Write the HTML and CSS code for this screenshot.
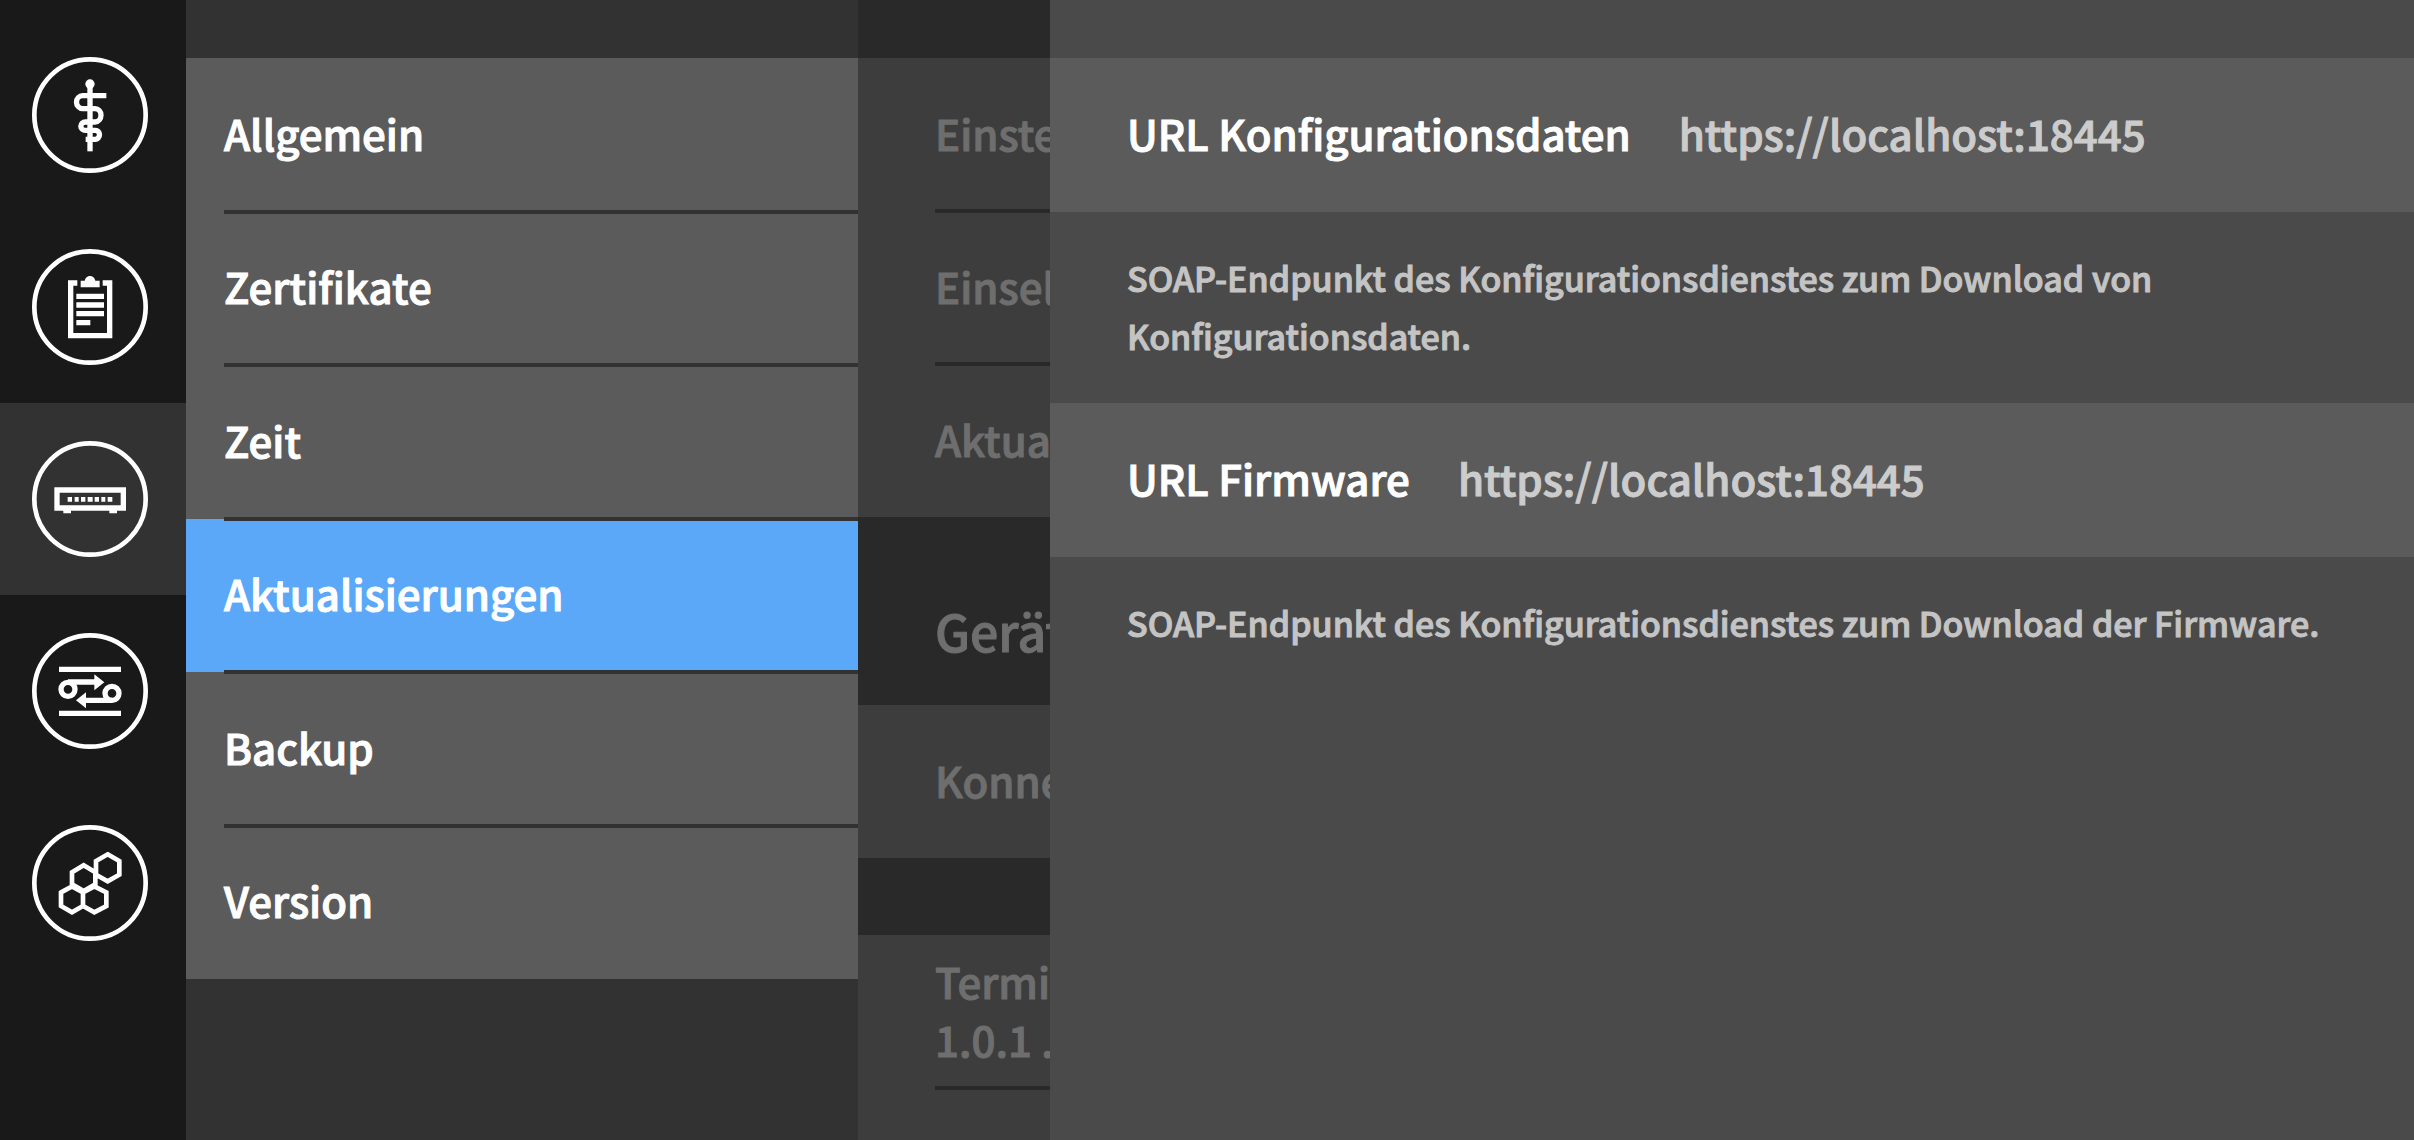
FILE: index.html
```html
<!DOCTYPE html>
<html lang="de">
<head>
<meta charset="utf-8">
<title>Aktualisierungen</title>
<link rel="stylesheet" href="styles.css">
</head>
<body>
<div class="app">
  <nav class="rail" aria-label="Hauptnavigation">
    <a class="rail-item" href="#praxis" aria-label="Praxis">
      <svg class="icon" viewBox="96 51 348 348">
        <circle class="ring" cx="270" cy="225" r="167"/>
        <circle class="solid" cx="270" cy="132" r="14"/>
        <path class="line" d="M270 132V334"/>
        <path class="line" d="M319 167H248a18 19 0 0 0 0 39H285a18 20 0 0 1 0 40H256a13 12 0 0 0 0 25H286a12 13 0 0 1 0 27H257"/>
      </svg>
    </a>
    <a class="rail-item" href="#protokoll" aria-label="Protokoll">
      <svg class="icon" viewBox="96 43 348 348">
        <circle class="ring" cx="270" cy="217" r="167"/>
        <path class="line" d="M232 145H212V303H329V145H308"/>
        <path class="solid" d="M242 158V138H254Q258 124 270 124T286 138H299V158Z"/>
        <path class="line" d="M229 185H312M229 211H312M229 237H312M229 264H271"/>
      </svg>
    </a>
    <a class="rail-item rail-item-active" href="#konnektor" aria-label="Konnektor" aria-current="page">
      <svg class="icon" viewBox="96 123 348 348">
        <circle class="ring" cx="270" cy="297" r="167"/>
        <path class="line" d="M171 270H370V324H171Z"/>
        <path class="solid" d="M190 330H213V340H190ZM328 330H351V340H328Z"/>
        <path class="solid" d="M203 291h13v14h-13zM224 291h12v14h-12zM243 291h13v14h-13zM263 291h15v14h-15zM284 291h13v14h-13zM304 291h12v14h-12zM323 291h14v14h-14z"/>
      </svg>
    </a>
    <a class="rail-item" href="#netzwerk" aria-label="Netzwerk">
      <svg class="icon" viewBox="96 69 348 348">
        <circle class="ring" cx="270" cy="243" r="167"/>
        <path class="line" d="M177 178H363M177 310H363M204 216H296M336 271H245"/>
        <circle class="line" cx="204" cy="238" r="21"/>
        <circle class="line" cx="336" cy="250" r="21"/>
        <path class="solid" d="M283 193L313 217L283 241ZM258 247L228 271L258 295Z"/>
      </svg>
    </a>
    <a class="rail-item" href="#module" aria-label="Module">
      <svg class="icon" viewBox="96 75 348 348">
        <circle class="ring" cx="270" cy="249" r="167"/>
        <path class="hex" d="M323 163L358 183V224L323 244L288 224V183ZM251 196L286 217V253L251 273L216 253V217ZM216 259L249 277V318L216 337L183 318V277ZM283 259L319 277V318L283 337L249 318V277Z"/>
      </svg>
    </a>
  </nav>

  <nav class="menu" aria-label="Konnektor">
    <ul class="menu-list">
      <li class="menu-row"><a class="menu-link" href="#allgemein">Allgemein</a></li>
      <li class="menu-row"><a class="menu-link" href="#zertifikate">Zertifikate</a></li>
      <li class="menu-row"><a class="menu-link" href="#zeit">Zeit</a></li>
      <li class="menu-row menu-row-active"><a class="menu-link" href="#aktualisierungen" aria-current="page">Aktualisierungen</a></li>
      <li class="menu-row"><a class="menu-link" href="#backup">Backup</a></li>
      <li class="menu-row"><a class="menu-link" href="#version">Version</a></li>
    </ul>
  </nav>

  <section class="under">
    <ul class="under-list">
      <li class="under-row">Einstell</li>
      <li class="under-row">Einsel</li>
      <li class="under-row">Aktual</li>
    </ul>
    <h2 class="under-title">Gerät</h2>
    <ul class="under-list">
      <li class="under-row">Konnek</li>
    </ul>
    <ul class="under-list under-list-spaced">
      <li class="under-row">Termi<br>1.0.1 ...</li>
      <li class="under-row"></li>
    </ul>
  </section>

  <main class="panel">
    <dl class="settings">
      <div class="setting"><dt>URL Konfigurationsdaten</dt><dd class="value">https://localhost:18445</dd></div>
      <dd class="hint">SOAP-Endpunkt des Konfigurationsdienstes zum Download von Konfigurationsdaten.</dd>
      <div class="setting"><dt>URL Firmware</dt><dd class="value">https://localhost:18445</dd></div>
      <dd class="hint">SOAP-Endpunkt des Konfigurationsdienstes zum Download der Firmware.</dd>
    </dl>
  </main>
</div>
</body>
</html>
```
FILE: styles.css
```css
* { box-sizing: border-box; }

body {
  margin: 0;
  background: #323232;
  color: #fff;
  font-family: "Noto Sans CJK SC", "Noto Sans", sans-serif;
  font-size: 42px;
  font-weight: 500;
  line-height: 58px;
  -webkit-text-stroke: 1px;
}

ul, dl, dd, h2 { margin: 0; padding: 0; list-style: none; }
a { color: inherit; text-decoration: none; }

.app {
  display: grid;
  grid-template-columns: 186px 672px 192px minmax(0, 1fr);
  height: 100vh;
  overflow: hidden;
}

/* Icon rail */
.rail { background: #191919; padding-top: 19px; }
.rail-item { display: flex; align-items: center; height: 192px; padding-left: 32px; }
.rail-item-active { background: #323232; }
.icon { width: 116px; height: 116px; fill: none; stroke: #fff; }
.ring { stroke-width: 14; }
.line { stroke-width: 16; }
.hex { stroke-width: 14; }
.solid { fill: #fff; stroke: none; }

/* Section menu */
.menu { background: #323232; padding-top: 58px; }
.menu-list { display: grid; grid-auto-rows: 1fr; min-height: 921px; background: #5b5b5b; }
.menu-row { display: flex; padding-left: 38px; }
.menu-row-active { background: #5ba8f8; }
.menu-link { display: flex; flex: 1; align-items: center; padding-bottom: 4px; }
.menu-row + .menu-row .menu-link { box-shadow: 0 -2px #323232, inset 0 2px #323232; }

/* Dimmed page below the open panel */
.under { background: #292929; color: #6e6e6e; padding-top: 58px; overflow: hidden; white-space: nowrap; }
.under-list { background: #3d3d3d; padding-left: 77px; }
.under-list-spaced { margin-top: 77px; }
.under-row { display: flex; align-items: center; min-height: 153px; padding-bottom: 4px; }
.under-row + .under-row { box-shadow: 0 -2px #292929, inset 0 2px #292929; }
.under-title { padding: 84px 0 46px 77px; font-size: 50px; font-weight: 500; line-height: 58px; }

/* Detail panel */
.panel { background: #4a4a4a; padding-top: 58px; }
.setting { display: flex; align-items: center; gap: 48px; min-height: 154px; padding: 0 77px 4px; background: #5b5b5b; }
.value { color: #ccc; }
.hint { padding: 37px 77px 38px; color: #c4c4c4; font-size: 34px; }
```
